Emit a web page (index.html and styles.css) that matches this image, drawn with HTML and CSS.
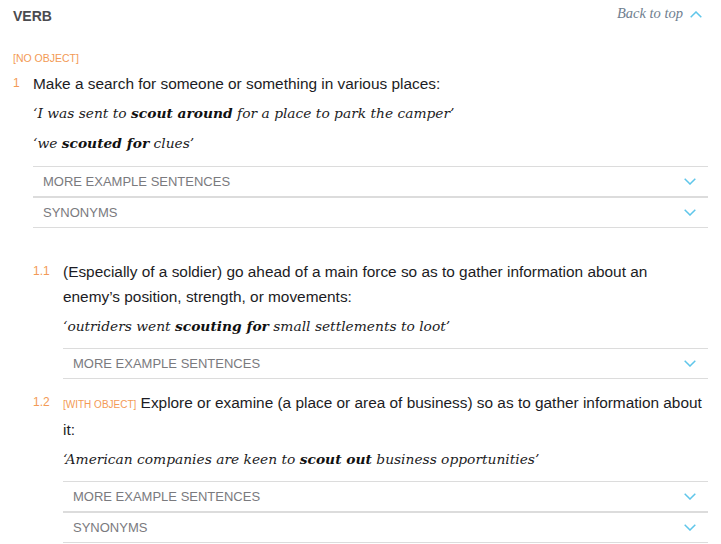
FILE: index.html
```html
<!DOCTYPE html>
<html lang="en">
<head>
<meta charset="utf-8">
<title>scout — verb</title>
<link rel="stylesheet" href="styles.css">
</head>
<body>
<section class="entry">
  <header class="entry-head">
    <h3 class="pos">VERB</h3>
    <a class="back-top" href="#">Back to top
      <svg class="chev-up" width="12" height="7" viewBox="0 0 12 7"><path d="M0.7 6.3 L6 1 L11.3 6.3" fill="none" stroke="#5fc6ea" stroke-width="1.5"/></svg>
    </a>
  </header>

  <div class="grammar">[no object]</div>

  <div class="sense">
    <span class="num">1</span>
    <div class="body">
      <p class="def">Make a search for someone or something in various places:</p>
      <p class="ex">‘I was sent to <b>scout around</b> for a place to park the camper’</p>
      <p class="ex">‘we <b>scouted for</b> clues’</p>
      <div class="acc">
        <div class="acc-row"><span>More example sentences</span><svg class="chev" width="12" height="7" viewBox="0 0 12 7"><path d="M0.7 0.7 L6 6 L11.3 0.7" fill="none" stroke="#5fc6ea" stroke-width="1.5"/></svg></div>
        <div class="acc-row"><span>Synonyms</span><svg class="chev" width="12" height="7" viewBox="0 0 12 7"><path d="M0.7 0.7 L6 6 L11.3 0.7" fill="none" stroke="#5fc6ea" stroke-width="1.5"/></svg></div>
      </div>

      <div class="subsenses">
        <div class="sense sub">
          <span class="num">1.1</span>
          <div class="body">
            <p class="def">(Especially of a soldier) go ahead of a main force so as to gather information about an enemy’s position, strength, or movements:</p>
            <p class="ex">‘outriders went <b>scouting for</b> small settlements to loot’</p>
            <div class="acc">
              <div class="acc-row"><span>More example sentences</span><svg class="chev" width="12" height="7" viewBox="0 0 12 7"><path d="M0.7 0.7 L6 6 L11.3 0.7" fill="none" stroke="#5fc6ea" stroke-width="1.5"/></svg></div>
            </div>
          </div>
        </div>

        <div class="sense sub">
          <span class="num">1.2</span>
          <div class="body">
            <p class="def"><span class="gram-inline">[with object]</span> Explore or examine (a place or area of business) so as to gather information about it:</p>
            <p class="ex">‘American companies are keen to <b>scout out</b> business opportunities’</p>
            <div class="acc">
              <div class="acc-row"><span>More example sentences</span><svg class="chev" width="12" height="7" viewBox="0 0 12 7"><path d="M0.7 0.7 L6 6 L11.3 0.7" fill="none" stroke="#5fc6ea" stroke-width="1.5"/></svg></div>
              <div class="acc-row"><span>Synonyms</span><svg class="chev" width="12" height="7" viewBox="0 0 12 7"><path d="M0.7 0.7 L6 6 L11.3 0.7" fill="none" stroke="#5fc6ea" stroke-width="1.5"/></svg></div>
            </div>
          </div>
        </div>
      </div>
    </div>
  </div>
</section>
</body>
</html>
```

FILE: styles.css
```css
html, body {
  margin: 0;
  padding: 0;
  background: #fff;
}

body {
  font-family: "Liberation Sans", Arial, sans-serif;
  color: #1c1c24;
}

.entry {
  padding: 0 13px 0 13px;
}

.entry-head {
  display: flex;
  justify-content: space-between;
  align-items: flex-start;
  height: 32px;
}

.pos {
  margin: 0;
  font-size: 14px;
  font-weight: bold;
  line-height: 32px;
  color: #4b4b4f;
}

.back-top {
  display: flex;
  align-items: center;
  gap: 7px;
  margin-top: 5px;
  margin-right: 6px;
  font-family: "Liberation Serif", serif;
  font-style: italic;
  font-size: 14.5px;
  line-height: 16px;
  color: #70808f;
  text-decoration: none;
}

.chev-up {
  display: block;
  margin-top: 2px;
}

.grammar {
  margin-top: 19px;
  font-size: 10.5px;
  line-height: 14px;
  text-transform: uppercase;
  color: #f39a55;
}

.sense {
  display: flex;
  margin-top: 6px;
}

.num {
  flex: none;
  width: 20px;
  font-size: 12px;
  line-height: 25px;
  color: #f39a55;
}

.body {
  flex: 1;
  min-width: 0;
}

.def {
  margin: 0;
  font-size: 15.4px;
  line-height: 25px;
  color: #1c1c24;
}

.gram-inline {
  font-size: 10px;
  text-transform: uppercase;
  color: #f39a55;
}

.ex {
  margin: 2px 0 0 0;
  font-family: "DejaVu Serif", serif;
  font-style: italic;
  font-size: 13.8px;
  line-height: 30px;
  color: #1c1c24;
}

.ex + .ex {
  margin-top: 0;
}

.ex b {
  font-weight: bold;
  color: #111;
}

.acc {
  margin-top: 8px;
}

.sense.sub .acc {
  margin-top: 7px;
}

.acc-row {
  display: flex;
  align-items: center;
  justify-content: space-between;
  height: 29px;
  padding: 0 12px 0 10px;
  border-top: 1px solid #dcdcdc;
  border-bottom: 1px solid #dcdcdc;
  font-size: 13px;
  text-transform: uppercase;
  color: #7a7a7e;
}

.chev {
  display: block;
}

.subsenses {
  display: flex;
  flex-direction: column;
  gap: 11px;
  margin-top: 31px;
}

.sense.sub {
  margin-top: 0;
}

.sense.sub .num {
  width: 30px;
}
```
